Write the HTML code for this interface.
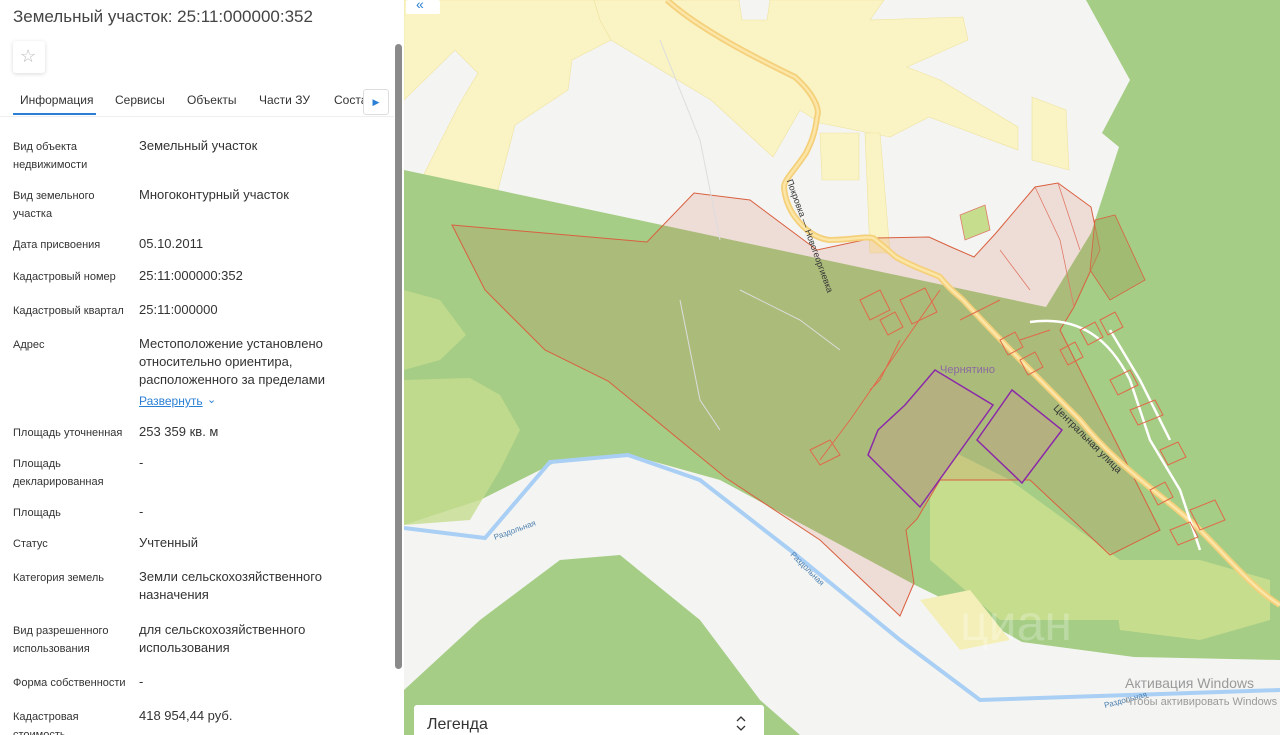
<!DOCTYPE html>
<html><head><meta charset="utf-8"><style>
*{margin:0;padding:0;box-sizing:border-box}
body{width:1280px;height:735px;overflow:hidden;position:relative;font-family:"Liberation Sans",sans-serif;background:#fff}
#panel{position:absolute;left:0;top:0;width:404px;height:735px;background:#fff;overflow:hidden}
.t{position:absolute;white-space:nowrap;line-height:18px}
.l{left:13px;font-size:11px;color:#333}
.v{left:139px;font-size:13px;color:#333}
#map{position:absolute;left:404px;top:0;width:876px;height:735px}
</style></head><body>
<div id="panel">
<div class="t" style="left:13px;top:6px;font-size:17px;line-height:22px;color:#444">Земельный участок: 25:11:000000:352</div>
<div style="position:absolute;left:13px;top:41px;width:32px;height:32px;border-radius:3px;box-shadow:0 1px 4px rgba(0,0,0,.15);background:#fff"></div>
<div class="t" style="left:20px;top:47px;font-size:18px;color:#bbb">☆</div>
<div class="t" style="left:20px;top:91px;font-size:12px;color:#333">Информация</div>
<div style="position:absolute;left:13px;top:113px;width:83px;height:2px;background:#2a7fd4"></div>
<div class="t" style="left:115px;top:91px;font-size:12px;color:#333">Сервисы</div>
<div class="t" style="left:187px;top:91px;font-size:12px;color:#333">Объекты</div>
<div class="t" style="left:259px;top:91px;font-size:12px;color:#333">Части ЗУ</div>
<div class="t" style="left:334px;top:91px;font-size:12px;color:#333">Соста</div>
<div style="position:absolute;left:363px;top:89px;width:26px;height:26px;border:1px solid #ddd;border-radius:3px;background:#fff;color:#2a7fd4;font-size:9px;text-align:center;line-height:24px">▶</div>
<div style="position:absolute;left:0;top:116px;width:394px;height:1px;background:#eee"></div>
<div style="position:absolute;left:395px;top:44px;width:7px;height:625px;border-radius:4px;background:#8a8a8a"></div>

<div class="t l" style="top:138px">Вид объекта</div><div class="t l" style="top:156px">недвижимости</div>
<div class="t v" style="top:137px">Земельный участок</div>
<div class="t l" style="top:187px">Вид земельного</div><div class="t l" style="top:205px">участка</div>
<div class="t v" style="top:186px">Многоконтурный участок</div>
<div class="t l" style="top:236px">Дата присвоения</div><div class="t v" style="top:235px">05.10.2011</div>
<div class="t l" style="top:268px">Кадастровый номер</div><div class="t v" style="top:267px">25:11:000000:352</div>
<div class="t l" style="top:302px">Кадастровый квартал</div><div class="t v" style="top:301px">25:11:000000</div>
<div class="t l" style="top:336px">Адрес</div>
<div class="t v" style="top:335px">Местоположение установлено</div>
<div class="t v" style="top:353px">относительно ориентира,</div>
<div class="t v" style="top:371px">расположенного за пределами</div>
<div class="t v" style="top:392px;font-size:12px;color:#2a7fd4;text-decoration:underline">Развернуть</div>
<div class="t" style="left:207px;top:391px;font-size:11px;color:#2a7fd4">⌄</div>
<div class="t l" style="top:424px">Площадь уточненная</div><div class="t v" style="top:423px">253 359 кв. м</div>
<div class="t l" style="top:455px">Площадь</div><div class="t l" style="top:473px">декларированная</div><div class="t v" style="top:454px">-</div>
<div class="t l" style="top:504px">Площадь</div><div class="t v" style="top:503px">-</div>
<div class="t l" style="top:535px">Статус</div><div class="t v" style="top:534px">Учтенный</div>
<div class="t l" style="top:569px">Категория земель</div>
<div class="t v" style="top:568px">Земли сельскохозяйственного</div><div class="t v" style="top:586px">назначения</div>
<div class="t l" style="top:622px">Вид разрешенного</div><div class="t l" style="top:640px">использования</div>
<div class="t v" style="top:621px">для сельскохозяйственного</div><div class="t v" style="top:639px">использования</div>
<div class="t l" style="top:674px">Форма собственности</div><div class="t v" style="top:673px">-</div>
<div class="t l" style="top:708px">Кадастровая</div><div class="t l" style="top:726px">стоимость</div>
<div class="t v" style="top:707px">418 954,44 руб.</div>
</div>

<svg id="map" viewBox="404 0 876 735" xmlns="http://www.w3.org/2000/svg">
<rect x="404" y="0" width="876" height="735" fill="#f4f4f2"/>
<polygon points="404,0 594,0 600,20 611,40 572,60 568,90 515,125 494,205 462,207 421,180 460,103 478,73 455,50 404,100" fill="#faf3c4" stroke="#efe3a0" stroke-width=".6"/>
<polygon points="594,0 739,0 742,20 767,20 770,0 884,0 870,20 963,17 968,40 907,67 940,80 1018,127 1018,150 929,117 890,137 820,123 800,110 773,157 711,100 611,40 600,20" fill="#faf3c4" stroke="#efe3a0" stroke-width=".6"/>
<polygon points="820,133 859,133 859,180 822,180" fill="#faf3c4" stroke="#efe3a0" stroke-width=".6"/>
<polygon points="865,133 880,133 890,253 870,253" fill="#faf3c4" stroke="#efe3a0" stroke-width=".6"/>
<polygon points="1032,97 1066,110 1069,170 1032,160" fill="#faf3c4" stroke="#efe3a0" stroke-width=".6"/>
<polygon points="1086,0 1280,0 1280,660 1134,657 1022,642 966,610 915,585 720,480 630,455 560,460 480,500 404,525 404,170 1046,307 1091,233 1119,147 1102,133 1130,80" fill="#a5cd85"/>
<polygon points="404,735 404,690 480,620 560,560 620,555 700,620 760,700 800,735" fill="#a5cd85"/>
<polygon points="404,290 440,300 466,335 440,360 404,370" fill="#c6dd8e" opacity=".8"/>
<polygon points="404,380 470,378 500,395 520,430 500,470 470,520 404,525" fill="#c6dd8e" opacity=".8"/>
<polygon points="930,440 1010,480 1120,560 1120,620 1000,620 930,560" fill="#c6dd8e"/>
<polygon points="1110,560 1200,560 1270,580 1270,620 1200,640 1120,630" fill="#c6dd8e"/>
<polygon points="920,600 970,590 1010,640 960,650" fill="#f4efb8"/>
<polygon points="960,215 985,205 990,230 965,240" fill="#c6dd8e" stroke="#e07a66" stroke-width=".8"/>
<polygon points="452,225 647,242 694,193 750,200 817,250 873,238 929,237 951,247 974,257 996,233 1035,187 1058,183 1091,207 1100,250 1074,307 1060,330 1160,530 1110,555 1030,480 940,480 917,519 906,530 914,583 900,616 820,540 726,478 608,381 545,350 485,290" fill="#d25a3c" fill-opacity=".15" stroke="#d9603f" stroke-width="1"/>
<path d="M1035,187 L1060,240 L1074,307 M1058,183 L1080,250 M1000,250 L1030,290" fill="none" stroke="#e07a66" stroke-width=".8"/>
<polygon points="1095,220 1115,215 1145,280 1110,300 1090,270" fill="#9fa95f" fill-opacity=".5" stroke="#d9603f" stroke-width=".8"/>
<polygon points="935,370 993,405 920,507 868,455 878,430 905,405" fill="#b5b080" stroke="#8b2aa8" stroke-width="1.5"/>
<polygon points="1012,390 1062,430 1022,483 977,440" fill="#b5b080" stroke="#8b2aa8" stroke-width="1.5"/>
<path d="M404,528 L485,538 L550,462 L628,455 L700,480 L790,550 L900,640 L980,700 L1280,690" fill="none" stroke="#a9cff5" stroke-width="4"/>
<path d="M667,0 C700,30 760,60 795,77 C815,95 820,110 817,117 C815,135 810,145 806,153 C795,170 784,180 784,187 C785,200 790,210 795,217 C805,230 815,238 829,240 C850,240 865,236 873,238 C880,243 890,252 896,257 C915,268 930,272 940,277 C950,290 958,295 963,300 C1000,340 1040,380 1080,420 C1120,470 1170,500 1200,530 C1230,560 1255,590 1280,605" fill="none" stroke="#f5d07a" stroke-width="6"/>
<path d="M667,0 C700,30 760,60 795,77 C815,95 820,110 817,117 C815,135 810,145 806,153 C795,170 784,180 784,187 C785,200 790,210 795,217 C805,230 815,238 829,240 C850,240 865,236 873,238 C880,243 890,252 896,257 C915,268 930,272 940,277 C950,290 958,295 963,300 C1000,340 1040,380 1080,420 C1120,470 1170,500 1200,530 C1230,560 1255,590 1280,605" fill="none" stroke="#fbe6a8" stroke-width="2.5"/>
<path d="M1030,322 C1080,315 1110,340 1130,380 L1150,440 L1180,490 L1200,550 M1110,330 L1140,380 L1170,440" fill="none" stroke="#fff" stroke-width="2.5"/>
<path d="M660,40 L700,140 L720,240 M680,300 L700,400 L720,430 M740,290 L800,320 L840,350" fill="none" stroke="#ddd" stroke-width="1"/>
<g fill="none" stroke="#e06a4a" stroke-width="1">
<path d="M860,300 l20,-10 10,20 -20,10z M880,320 l15,-8 8,15 -15,8z M900,300 l25,-12 12,24 -25,12z M810,450 l20,-10 10,15 -20,10z M1110,380 l20,-10 8,15 -20,10z M1130,410 l25,-10 8,15 -25,10z M1160,450 l18,-8 8,15 -18,8z M1190,510 l25,-10 10,20 -25,10z M1170,530 l20,-8 8,15 -20,8z M1080,330 l15,-8 8,15 -15,8z M1100,320 l15,-8 8,15 -15,8z M1060,350 l15,-8 8,15 -15,8z M1000,340 l15,-8 8,15 -15,8z M1020,360 l15,-8 8,15 -15,8z M1150,490 l15,-8 8,15 -15,8z"/>
<path d="M940,290 L850,420 L820,460 M900,340 L880,380 L870,390 M960,320 L1000,300 M1020,340 L1050,330"/>
</g>
<text x="940" y="373" font-size="11" fill="#8b6aa0" font-family="Liberation Sans">Чернятино</text>
<text x="1040" y="420" font-size="10" fill="#333" font-family="Liberation Sans" transform="rotate(45 1060 430)">Центральная улица</text>
<text x="780" y="190" font-size="9" fill="#333" font-family="Liberation Sans" transform="rotate(70 790 190)">Покровка — Новогеоргиевка</text>
<text x="495" y="540" font-size="8" fill="#4a7fb0" font-family="Liberation Sans" transform="rotate(-20 495 540)">Раздольная</text>
<text x="790" y="555" font-size="8" fill="#4a7fb0" font-family="Liberation Sans" transform="rotate(45 790 555)">Раздольная</text>
<text x="1105" y="708" font-size="8" fill="#4a7fb0" font-family="Liberation Sans" transform="rotate(-15 1105 708)">Раздольная</text>
<text x="960" y="640" font-size="50" fill="#fff" fill-opacity=".25" font-family="Liberation Sans">циан</text>
<text x="1125" y="688" font-size="14" fill="#9a9a9a" font-family="Liberation Sans">Активация Windows</text>
<text x="1125" y="705" font-size="11" fill="#9a9a9a" font-family="Liberation Sans">Чтобы активировать Windows</text>
<rect x="406" y="0" width="34" height="14" rx="2" fill="#fff"/>
<text x="416" y="9" font-size="14" fill="#2a7fd4" font-family="Liberation Sans">«</text>
<rect x="414" y="705" width="350" height="40" rx="3" fill="#fff"/>
<text x="427" y="729" font-size="16" fill="#333" font-family="Liberation Sans">Легенда</text>
<path d="M737,721 l4,-4 4,4 M737,726 l4,4 4,-4" fill="none" stroke="#333" stroke-width="1.3"/>
</svg>
</body></html>
